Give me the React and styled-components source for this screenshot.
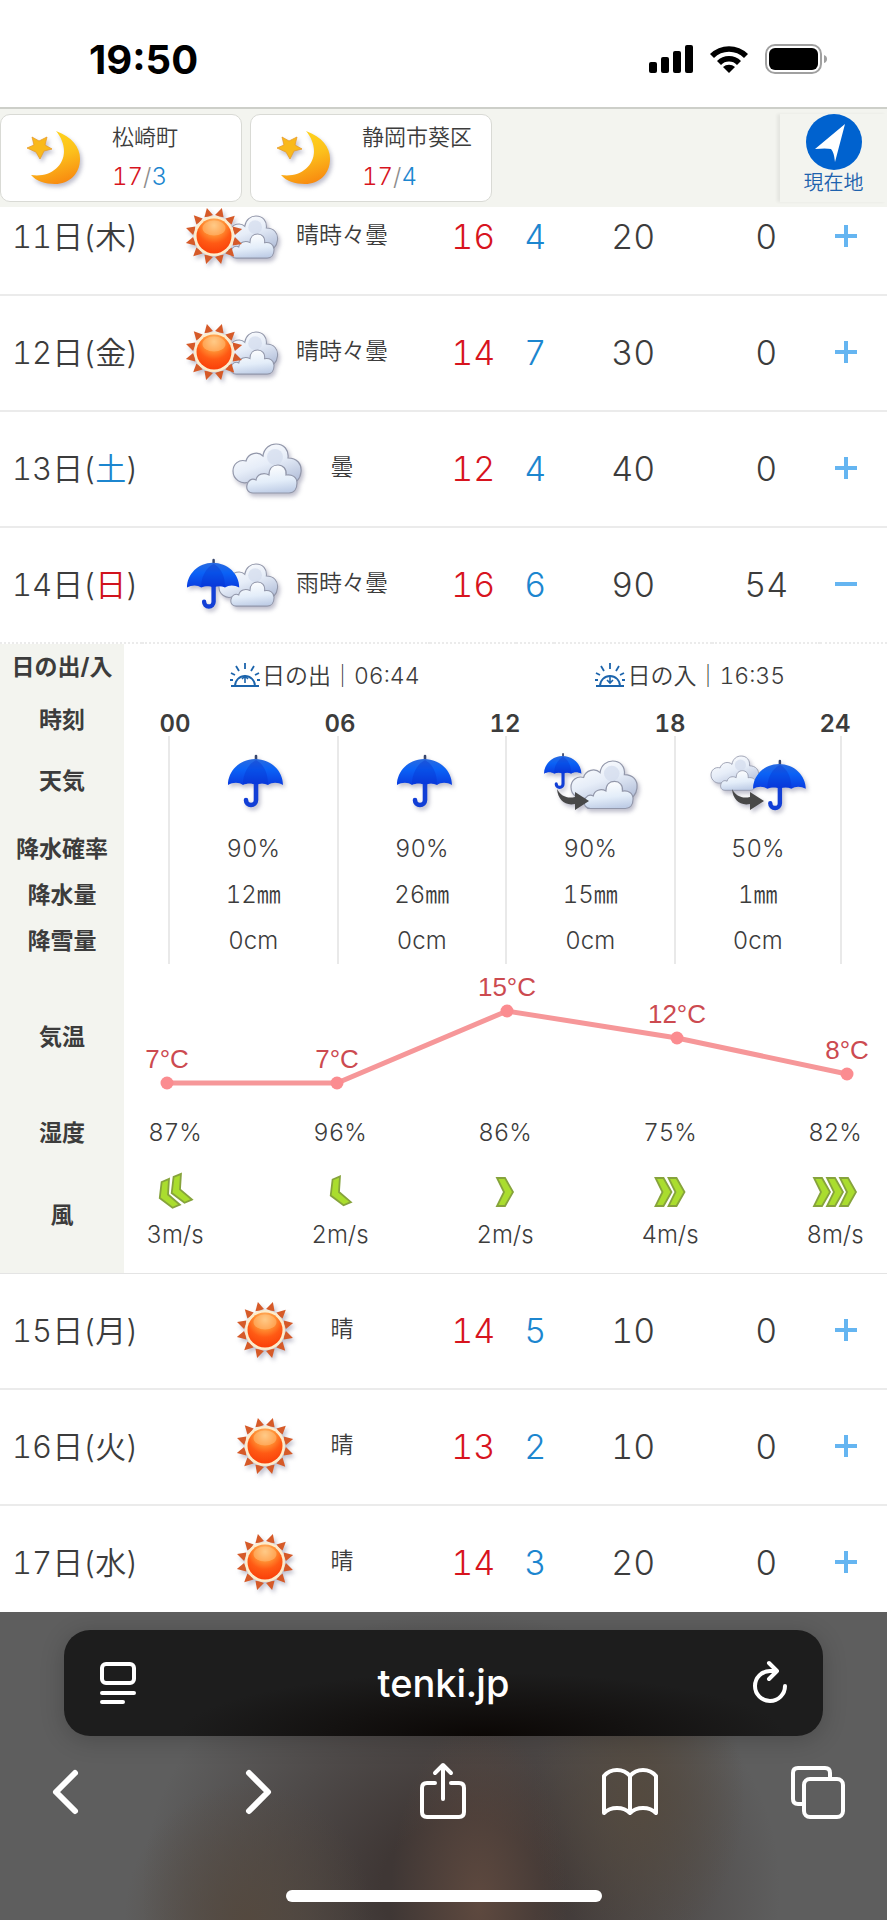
import React, { useState } from 'react'
import styled, { createGlobalStyle } from 'styled-components'

const days = [
    { day: 11, week: '木', icon: 'sunCloud', text: '晴時々曇', high: 16, low: 4, chance: 20, rain: 0 },
    { day: 12, week: '金', icon: 'sunCloud', text: '晴時々曇', high: 14, low: 7, chance: 30, rain: 0 },
    { day: 13, week: '土', icon: 'cloud', text: '曇', high: 12, low: 4, chance: 40, rain: 0 },
    { day: 14, week: '日', icon: 'rainCloud', text: '雨時々曇', high: 16, low: 6, chance: 90, rain: 54 },
    { day: 15, week: '月', icon: 'sun', text: '晴', high: 14, low: 5, chance: 10, rain: 0 },
    { day: 16, week: '火', icon: 'sun', text: '晴', high: 13, low: 2, chance: 10, rain: 0 },
    { day: 17, week: '水', icon: 'sun', text: '晴', high: 14, low: 3, chance: 20, rain: 0 },
]

const details = {
    14: {
        sunrise: '06:44',
        sunset: '16:35',
        hours: ['00', '06', '12', '18', '24'],
        icons: ['rain', 'rain', 'rainToCloud', 'cloudToRain'],
        chance: ['90%', '90%', '90%', '50%'],
        rain: ['12㎜', '26㎜', '15㎜', '1㎜'],
        snow: ['0cm', '0cm', '0cm', '0cm'],
        temps: [7, 7, 15, 12, 8],
        humidity: ['87%', '96%', '86%', '75%', '82%'],
        wind: [
            { speed: 3, level: 2, angle: 157 },
            { speed: 2, level: 1, angle: 157 },
            { speed: 2, level: 1, angle: 0 },
            { speed: 4, level: 2, angle: 0 },
            { speed: 8, level: 3, angle: 0 },
        ],
    },
}

const places = [
    { name: '松崎町', high: 17, low: 3 },
    { name: '静岡市葵区', high: 17, low: 4 },
]

const weekColors = { '土': '#1c86cf', '日': '#d0131d' }

/* ---------- weather drawings ---------- */

const rays = Array.from({ length: 12 }, (_, i) => 15 + i * 30)

const Gradients = () => (
    <HiddenSvg aria-hidden='true'>
        <defs>
            <radialGradient id='sunBody' cx='0.5' cy='0.2' r='0.85'>
                <stop offset='0' stopColor='#ffc27a' />
                <stop offset='0.35' stopColor='#ff8c30' />
                <stop offset='0.6' stopColor='#ff5a14' />
                <stop offset='1' stopColor='#f83c08' />
            </radialGradient>
            <linearGradient id='cloudBack' x1='0.2' y1='0' x2='0.8' y2='1'>
                <stop offset='0' stopColor='#ffffff' />
                <stop offset='0.5' stopColor='#e6edf8' />
                <stop offset='1' stopColor='#b4c0da' />
            </linearGradient>
            <linearGradient id='cloudFront' x1='0.3' y1='0' x2='0.5' y2='1'>
                <stop offset='0' stopColor='#ffffff' />
                <stop offset='0.6' stopColor='#e3edf9' />
                <stop offset='1' stopColor='#bfcde6' />
            </linearGradient>
            <linearGradient id='umbrella' x1='0' y1='0' x2='0' y2='1'>
                <stop offset='0' stopColor='#2a6ae0' />
                <stop offset='0.4' stopColor='#0a62f6' />
                <stop offset='1' stopColor='#0a3ce0' />
            </linearGradient>
            <linearGradient id='moonBody' x1='0.3' y1='0' x2='0.6' y2='1'>
                <stop offset='0' stopColor='#ffd61c' />
                <stop offset='0.5' stopColor='#fcc01c' />
                <stop offset='1' stopColor='#f88a10' />
            </linearGradient>
        </defs>
    </HiddenSvg>
)

const Sun = ({ x, y }) => (
    <g transform={`translate(${x} ${y})`}>
        {rays.map((angle) => (
            <path key={angle} d='M-4.4 -20.5 Q0 -19.5 4.4 -20.5 L0.4 -29 Z' fill='#d65a28' transform={`rotate(${angle})`} />
        ))}
        <circle r='20' fill='#fdeccb' />
        <circle r='17.5' fill='url(#sunBody)' />
        <ellipse cy='-8' rx='11.5' ry='7.5' fill='#ffd9a0' opacity='0.35' />
    </g>
)

const Cloud = ({ x, y, scale = 1 }) => (
    <g transform={`translate(${x} ${y}) scale(${scale})`} stroke='#9297aa' strokeWidth='1.2'>
        <path d='M16 38 C8 41 0 35 0 27 C0 20 6 15 13 17 C15 9 25 7 30 12 C31 4 37 0 43 0 C51 0 56 6 55 14 C64 14 69 20 68 28 C67 36 62 39 57 39 Z' fill='url(#cloudBack)' />
        <circle cx='42' cy='13' r='8' fill='#d3dced' stroke='none' opacity='0.7' />
        <path d='M20 49 C15 49 13 45 14 41 C15 36 19 34 23 36 C24 30 31 28 36 31 C36 24 40 21 45 21 C50 21 54 25 53 31 C59 30 64 33 64 39 C64 45 61 49 56 49 Z' fill='url(#cloudFront)' />
    </g>
)

const Umbrella = ({ x, y, scale = 1 }) => (
    <g transform={`translate(${x} ${y}) scale(${scale})`}>
        <path d='M28 24 V44 A5 5 0 0 1 18 44' fill='none' stroke='#123fd6' strokeWidth='4.6' strokeLinecap='round' />
        <path d='M28 0 V5' stroke='#39476e' strokeWidth='2.6' strokeLinecap='round' />
        <path d='M0 29 C0 15 12 3 27 3 C43 3 55 15 55 29 C50 26 44 26 40 29 C36 27 32 27 28 29 C24 27 19 27 15 29 C11 26 5 26 0 29 Z' fill='url(#umbrella)' />
        <path d='M28 4 C19 9 15 19 15 28 C19 27 24 27 28 28 C32 27 36 27 40 28 C40 19 37 9 28 4 Z' fill='#0628c8' opacity='0.3' />
    </g>
)

const ThenArrow = ({ x }) => (
    <path transform={`translate(${x} 0)`} d='M14 38 C15 49 22 55 32 53 L32 59 L46 50 L32 41 L32 46 C24 48 18 45 14 38 Z' fill='#484848' />
)

const drawings = {
    sun: <Sun x={46} y={30} />,
    cloud: <Cloud x={14} y={6} />,
    rain: <Umbrella x={22} y={5} />,
    sunCloud: <><Cloud x={35} y={10} scale={0.86} /><Sun x={30} y={30} /></>,
    rainCloud: <><Cloud x={35} y={10} scale={0.86} /><Umbrella x={3} y={6} scale={0.95} /></>,
    rainToCloud: <><Umbrella x={1} y={3} scale={0.68} /><Cloud x={28} y={10} scale={0.97} /><ThenArrow x={0} /></>,
    cloudToRain: <><Cloud x={0} y={5} scale={0.7} /><Umbrella x={42} y={10} scale={0.96} /><ThenArrow x={7} /></>,
}

const WeatherIcon = ({ name }) => (
    <IconSvg width='94' height='60' viewBox='0 0 94 60' aria-hidden='true'>{drawings[name]}</IconSvg>
)

const Moon = () => (
    <IconSvg width='56' height='56' viewBox='0 0 56 56' aria-hidden='true'>
        <path d='M30 1 C46 7 54 17 54 29 C54 44 43 54 29 54 C19 54 10 51 5 45 C23 48 38 37 38 21 C38 14 35 7 30 1 Z' fill='url(#moonBody)' />
        <path d='M6 7 L13 11 L21 7 L19 15 L26 19 L18 21 L14 29 L10 22 L1 18 L8 15 Z' fill='#f9b91b' stroke='#e89c28' strokeWidth='0.8' />
    </IconSvg>
)

const SunLine = ({ down }) => (
    <svg width='30' height='26' viewBox='0 0 30 26' fill='none' stroke='#1c64ac' strokeWidth='1.8' aria-hidden='true'>
        <path d='M1 24 H29 M5 24 A10 10 0 0 1 25 24 M15 1 V7 M6 4 L9 9 M24 4 L21 9 M1 11 L5 13 M29 11 L25 13 M0 18 H3 M27 18 H30' />
        <path d={down ? 'M15 14 V21 M12 18 L15 21 L18 18' : 'M15 21 V14 M12 17 L15 14 L18 17'} strokeWidth='1.6' />
    </svg>
)

const WindMark = ({ level, angle }) => {
    const start = 30 - (18 + (level - 1) * 13) / 2
    return (
        <svg width='60' height='40' viewBox='0 0 60 40' aria-hidden='true'>
            <g transform={`rotate(${angle} 29 20)`} fill='#aadd2e' stroke='#86a33c' strokeWidth='1.8'>
                {Array.from({ length: level }, (_, i) => (
                    <path key={i} d='M1 6 H9 L17 20 L9 34 H1 L8 20 Z' transform={`translate(${start + i * 13} 0)`} />
                ))}
            </g>
        </svg>
    )
}

const TempChart = ({ temps }) => {
    const points = temps.map((t, i) => ({ t, x: 43 + i * 170, y: 119 - (t - 7) * 9 }))
    return (
        <ChartSvg viewBox='0 0 763 146' role='img' aria-label='気温'>
            <polyline points={points.map((p) => `${p.x},${p.y}`).join(' ')} fill='none' stroke='#f69799' strokeWidth='5' />
            {points.map((p) => (
                <g key={p.x}>
                    <circle cx={p.x} cy={p.y} r='6.5' fill='#fb8c90' />
                    <text x={p.x} y={p.y - 15} textAnchor='middle'>{p.t}°C</text>
                </g>
            ))}
        </ChartSvg>
    )
}

/* ---------- sections ---------- */

const Detail = ({ data }) => (
    <DetailTable>
        <tbody>
            <DetailRow>
                <DetailLabel>日の出/入</DetailLabel>
                <SunTimes colSpan={5}>
                    <div>
                        <span><SunLine />日の出｜{data.sunrise}</span>
                        <span><SunLine down />日の入｜{data.sunset}</span>
                    </div>
                </SunTimes>
            </DetailRow>
            <PointRow $hours>
                <DetailLabel>時刻</DetailLabel>
                {data.hours.map((h) => <td key={h}>{h}</td>)}
            </PointRow>
            <SpanRow $tall>
                <DetailLabel>天気</DetailLabel>
                {data.icons.map((name, i) => <td key={i}><WeatherIcon name={name} /></td>)}
            </SpanRow>
            <SpanRow>
                <DetailLabel>降水確率</DetailLabel>
                {data.chance.map((v, i) => <td key={i}>{v}</td>)}
            </SpanRow>
            <SpanRow>
                <DetailLabel>降水量</DetailLabel>
                {data.rain.map((v, i) => <td key={i}>{v}</td>)}
            </SpanRow>
            <SpanRow>
                <DetailLabel>降雪量</DetailLabel>
                {data.snow.map((v, i) => <td key={i}>{v}</td>)}
            </SpanRow>
            <DetailRow>
                <DetailLabel>気温</DetailLabel>
                <ChartCell colSpan={5}><TempChart temps={data.temps} /></ChartCell>
            </DetailRow>
            <PointRow>
                <DetailLabel>湿度</DetailLabel>
                {data.humidity.map((v, i) => <td key={i}>{v}</td>)}
            </PointRow>
            <PointRow $wind>
                <DetailLabel>風</DetailLabel>
                {data.wind.map((w, i) => (
                    <td key={i}>
                        <WindMark level={w.level} angle={w.angle} />
                        {w.speed}m/s
                    </td>
                ))}
            </PointRow>
        </tbody>
    </DetailTable>
)

const App = () => {
    const [openDay, setOpenDay] = useState(14)

    const toggleDay = (day) => {
        setOpenDay(openDay === day ? undefined : day)
    }

    return (
        <>
            <GlobalStyle />
            <Gradients />
            <Header>
                <StatusBar>
                    <time>19:50</time>
                    <div className='signals'>
                        <svg width='44' height='28' viewBox='0 0 44 28'>
                            <rect x='0' y='17' width='8' height='11' rx='2' />
                            <rect x='12' y='12' width='8' height='16' rx='2' />
                            <rect x='24' y='6' width='8' height='22' rx='2' />
                            <rect x='36' y='0' width='8' height='28' rx='2' />
                        </svg>
                        <svg width='38' height='28' viewBox='0 0 38 28'>
                            <path d='M0 9 A27 27 0 0 1 38 9 L34 13 A21 21 0 0 0 4 13 Z' />
                            <path d='M7 16 A17 17 0 0 1 31 16 L27 20 A11 11 0 0 0 11 20 Z' />
                            <path d='M13 22 A9 9 0 0 1 25 22 L19 28 Z' />
                        </svg>
                        <svg width='62' height='30' viewBox='0 0 62 30'>
                            <rect x='1' y='1' width='55' height='28' rx='9' fill='none' stroke='#a0a0a0' strokeWidth='2' />
                            <rect x='4' y='4' width='49' height='22' rx='6' />
                            <path d='M59 11 Q62 12 62 15 Q62 18 59 19 Z' fill='#a0a0a0' />
                        </svg>
                    </div>
                </StatusBar>
                <PlaceBar>
                    {places.map((p) => (
                        <PlaceCard href='#' key={p.name}>
                            <Moon />
                            <div>
                                <PlaceName>{p.name}</PlaceName>
                                <PlaceTemp><Temp $hot>{p.high}</Temp>/<Temp>{p.low}</Temp></PlaceTemp>
                            </div>
                        </PlaceCard>
                    ))}
                    <HereButton type='button'>
                        <svg width='56' height='56' viewBox='0 0 56 56' aria-hidden='true'>
                            <circle cx='28' cy='28' r='28' fill='#0062cf' />
                            <path d='M39 10 L29 48 Q28 38 25 35 Q20 34 9 35 Z' fill='#fff' />
                        </svg>
                        現在地
                    </HereButton>
                </PlaceBar>
            </Header>
            <Forecast>
                <colgroup>
                    <col className='date' />
                    <col className='weather' />
                    <col className='high' />
                    <col className='low' />
                    <col className='chance' />
                    <col className='rain' />
                    <col className='toggle' />
                </colgroup>
                <tbody>
                    {days.map((d) => {
                        const open = d.day === openDay
                        return (
                            <React.Fragment key={d.day}>
                                <DayRow $open={open}>
                                    <DateCell scope='row'>{d.day}日(<Week $color={weekColors[d.week]}>{d.week}</Week>)</DateCell>
                                    <td><Weather><WeatherIcon name={d.icon} /><span>{d.text}</span></Weather></td>
                                    <td><Temp $hot>{d.high}</Temp></td>
                                    <td><Temp>{d.low}</Temp></td>
                                    <td>{d.chance}</td>
                                    <td>{d.rain}</td>
                                    <ToggleCell>
                                        <ToggleButton type='button' aria-expanded={open} aria-label={`${d.day}日`} onClick={() => toggleDay(d.day)}>
                                            <svg width='22' height='22' viewBox='0 0 22 22' stroke='#65b5f1' strokeWidth='4'>
                                                <path d={open ? 'M0 11 H22' : 'M0 11 H22 M11 0 V22'} />
                                            </svg>
                                        </ToggleButton>
                                    </ToggleCell>
                                </DayRow>
                                {open && details[d.day] && (
                                    <tr>
                                        <DetailCell colSpan={7}><Detail data={details[d.day]} /></DetailCell>
                                    </tr>
                                )}
                            </React.Fragment>
                        )
                    })}
                </tbody>
            </Forecast>
            <BrowserBar>
                <AddressBar>
                    <BarButton type='button' aria-label='ページメニュー'>
                        <svg width='36' height='42' viewBox='0 0 36 42'>
                            <rect x='2' y='2' width='32' height='19' rx='4' />
                            <path d='M2 31 H34 M2 40 H23' />
                        </svg>
                    </BarButton>
                    <span>tenki.jp</span>
                    <BarButton type='button' aria-label='再読み込み'>
                        <svg width='36' height='44' viewBox='0 0 36 44'>
                            <path d='M34 25 A15 15 0 1 1 19 10 L25 10 M18 2 L26 10 L18 18' />
                        </svg>
                    </BarButton>
                </AddressBar>
                <Toolbar>
                    <BarButton type='button' aria-label='戻る' $bold>
                        <svg width='56' height='58' viewBox='0 0 56 58'><path d='M37 10 L18 29 L37 48' /></svg>
                    </BarButton>
                    <BarButton type='button' aria-label='進む' $bold>
                        <svg width='56' height='58' viewBox='0 0 56 58'><path d='M23 10 L42 29 L23 48' /></svg>
                    </BarButton>
                    <BarButton type='button' aria-label='共有'>
                        <svg width='56' height='58' viewBox='0 0 56 58'>
                            <path d='M21 20 H13 Q8 20 8 25 V49 Q8 54 13 54 H45 Q50 54 50 49 V25 Q50 20 45 20 H37 M29 36 V3 M21 10 L29 2 L37 10' />
                        </svg>
                    </BarButton>
                    <BarButton type='button' aria-label='ブックマーク'>
                        <svg width='56' height='58' viewBox='0 0 56 58'>
                            <path d='M28 13 Q23 7 15 7 Q7 7 2 13 V50 Q7 45 15 45 Q23 45 28 50 Q33 45 41 45 Q49 45 54 50 V13 Q49 7 41 7 Q33 7 28 13 V50' />
                        </svg>
                    </BarButton>
                    <BarButton type='button' aria-label='タブ'>
                        <svg width='56' height='58' viewBox='0 0 56 58'>
                            <path d='M14 41 H8 Q3 41 3 36 V10 Q3 5 8 5 H35 Q40 5 40 10 V16' />
                            <rect x='14' y='16' width='39' height='38' rx='6' />
                        </svg>
                    </BarButton>
                </Toolbar>
                <HomeIndicator />
            </BrowserBar>
        </>
    )
}

const GlobalStyle = createGlobalStyle`
* {
    box-sizing: border-box;
}
body {
    margin: 0;
    background: #fff;
    color: #3c3c3c;
    font-family: Inter, 'Noto Sans CJK JP', sans-serif;
    font-weight: 350;
    font-variant-numeric: tabular-nums;
}
button {
    border: 0;
    padding: 0;
    background: none;
    font: inherit;
    color: inherit;
    cursor: pointer;
}
svg {
    display: block;
    flex: none;
}
`

const HiddenSvg = styled.svg`
    position: absolute;
    width: 0;
    height: 0;
`

const IconSvg = styled.svg`
    overflow: visible;
    filter: drop-shadow(2px 3px 2px rgba(70, 70, 110, 0.35));
`

const Header = styled.header`
    position: sticky;
    top: 0;
    z-index: 2;
`

const StatusBar = styled.div`
    display: flex;
    justify-content: space-between;
    align-items: center;
    height: 109px;
    padding: 11px 60px 0 89px;
    background: #fff;
    border-bottom: 2px solid #cdcfc9;
    time {
        color: #000;
        font-size: 40px;
        font-weight: 700;
        font-variant-numeric: normal;
    }
    .signals {
        display: flex;
        align-items: center;
        gap: 17px;
    }
`

const PlaceBar = styled.nav`
    display: flex;
    gap: 8px;
    height: 98px;
    padding: 5px 0;
    background: #f3f4ef;
`

const PlaceCard = styled.a`
    display: flex;
    align-items: center;
    gap: 30px;
    width: 242px;
    padding-left: 25px;
    background: #fff;
    border: 1px solid #d9dad5;
    border-radius: 10px;
    color: inherit;
    text-decoration: none;
    white-space: nowrap;
`

const PlaceName = styled.div`
    font-size: 22px;
    line-height: 38px;
`

const PlaceTemp = styled.div`
    font-size: 24px;
    line-height: 42px;
    color: #8c8c8c;
`

const Temp = styled.span`
    color: ${(props) => (props.$hot ? '#d7141e' : '#1c86cf')};
`

const HereButton = styled.button`
    display: flex;
    flex-direction: column;
    align-items: center;
    width: 107px;
    margin-left: auto;
    box-shadow: -3px 0 3px rgba(0, 0, 0, 0.06);
    color: #1e62ad;
    font-size: 20px;
    line-height: 26px;
`

const Forecast = styled.table`
    width: 100%;
    margin-top: -27px;
    margin-bottom: 300px;
    table-layout: fixed;
    border-spacing: 0;
    .date { width: 16%; }
    .weather { width: 32.5%; }
    .high { width: 9.7%; }
    .low { width: 4.3%; }
    .chance { width: 17.8%; }
    .rain { width: 12.2%; }
    .toggle { width: 7.5%; }
    td, th {
        padding: 0;
    }
`

const DayRow = styled.tr`
    height: 116px;
    font-size: 34px;
    text-align: center;
    white-space: nowrap;
    > td, > th {
        padding-bottom: 2px;
        border-bottom: 2px ${(props) => (props.$open ? 'dotted' : 'solid')} #ebebeb;
    }
`

const DateCell = styled.th`
    && {
        padding: 0 0 6px 12px;
    }
    font-size: 31px;
    font-weight: 350;
    text-align: left;
`

const Week = styled.span`
    color: ${(props) => props.$color || 'inherit'};
`

const Weather = styled.div`
    display: flex;
    justify-content: center;
    align-items: center;
    gap: 18px;
    font-size: 23px;
    span {
        padding-bottom: 6px;
    }
`

const ToggleCell = styled.td`
    && {
        padding-right: 16px;
    }
`

const ToggleButton = styled.button`
    display: grid;
    place-items: center;
    width: 44px;
    height: 44px;
    margin: 0 auto;
`

const DetailCell = styled.td`
    border-bottom: 1px solid #e4e4e4;
`

const DetailTable = styled.table`
    display: block;
    font-size: 24px;
    text-align: center;
    background: linear-gradient(to right, #f3f4ef 124px, #fff 124px);
    tbody {
        display: block;
    }
`

const DetailRow = styled.tr`
    display: grid;
    grid-template-columns: 124px 1fr;
    align-items: center;
    min-height: 46px;
`

const DetailLabel = styled.th`
    width: 124px;
    font-size: 23px;
    font-weight: 700;
    line-height: 32px;
`

const SunTimes = styled.td`
    font-size: 23px;
    line-height: 28px;
    div {
        display: flex;
        justify-content: space-around;
        padding: 18px 14px 0 18px;
    }
    span {
        display: flex;
        gap: 2px;
    }
`

const PointRow = styled.tr`
    display: grid;
    grid-template-columns: 142px 66px repeat(4, 1fr);
    align-items: ${(props) => (props.$hours ? 'end' : 'center')};
    height: ${(props) => (props.$wind ? '117px' : '46px')};
    padding-right: 19px;
    > td {
        display: flex;
        flex-direction: column;
        align-items: center;
        justify-self: end;
        width: 66px;
        line-height: ${(props) => (props.$hours ? '24px' : '46px')};
        font-weight: ${(props) => (props.$hours ? 600 : 350)};
    }
`

const SpanRow = styled.tr`
    display: grid;
    grid-template-columns: 168px repeat(4, 1fr);
    align-items: center;
    height: ${(props) => (props.$tall ? '90px' : '46px')};
    padding-right: 45px;
    > td {
        display: grid;
        place-items: center;
        align-self: stretch;
        border-left: 2px solid #e9e9e9;
        line-height: 46px;
    }
    > td:last-child {
        border-right: 2px solid #e9e9e9;
    }
`

const ChartCell = styled.td`
    display: block;
`

const ChartSvg = styled.svg`
    width: 100%;
    text {
        fill: #cc4a50;
        font-family: 'Liberation Sans', Arial, sans-serif;
        font-size: 26px;
        font-weight: 400;
    }
`

const BrowserBar = styled.footer`
    position: fixed;
    right: 0;
    bottom: 0;
    left: 0;
    z-index: 2;
    display: flex;
    flex-direction: column;
    align-items: center;
    height: 308px;
    padding-top: 18px;
    background:
        radial-gradient(ellipse 10% 60% at 54% 95%, #5e493f, transparent),
        radial-gradient(ellipse 12% 50% at 72% 60%, #544a3f, transparent),
        radial-gradient(ellipse 14% 45% at 28% 100%, #54493f, transparent),
        radial-gradient(ellipse 36% 90% at 52% 90%, #3f3735 25%, transparent),
        #5e5e5e;
`

const AddressBar = styled.div`
    display: grid;
    grid-template-columns: 1fr auto 1fr;
    align-items: center;
    width: calc(100% - 128px);
    height: 106px;
    padding: 0 32px 0 39px;
    border-radius: 26px;
    background: radial-gradient(ellipse 40% 60% at 55% 100%, #0b0705, #1d1d1d);
    box-shadow: 0 4px 24px rgba(0, 0, 0, 0.2);
    color: #fff;
    font-size: 38px;
    font-weight: 500;
    padding: 0 36px;
    button {
        justify-self: start;
    }
    button:last-child {
        justify-self: end;
    }
`

const Toolbar = styled.div`
    display: flex;
    justify-content: space-between;
    align-items: center;
    width: 100%;
    height: 112px;
    padding: 0 41px 0 38px;
`

const BarButton = styled.button`
    svg {
        overflow: visible;
        fill: none;
        stroke: #fff;
        stroke-width: ${(props) => (props.$bold ? 6 : 4)};
        stroke-linecap: round;
        stroke-linejoin: round;
    }
`

const HomeIndicator = styled.div`
    width: 316px;
    height: 12px;
    margin-top: 42px;
    border-radius: 6px;
    background: #fff;
`

export default App
